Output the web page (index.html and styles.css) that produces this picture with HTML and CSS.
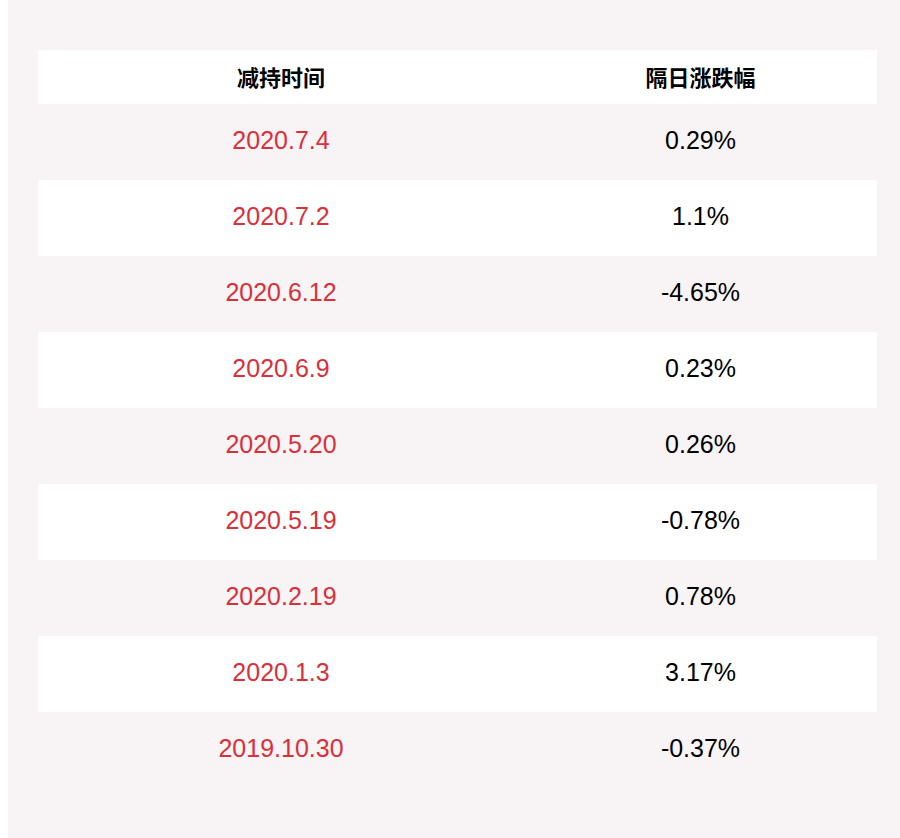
FILE: index.html
```html
<!DOCTYPE html>
<html lang="zh">
<head>
<meta charset="utf-8">
<link rel="stylesheet" href="styles.css">
</head>
<body>
<div class="panel">
  <table class="data">
    <thead>
      <tr class="head"><th class="c1">减持时间</th><th class="c2">隔日涨跌幅</th></tr>
    </thead>
    <tbody>
      <tr><td class="date">2020.7.4</td><td>0.29%</td></tr>
      <tr><td class="date">2020.7.2</td><td>1.1%</td></tr>
      <tr><td class="date">2020.6.12</td><td>-4.65%</td></tr>
      <tr><td class="date">2020.6.9</td><td>0.23%</td></tr>
      <tr><td class="date">2020.5.20</td><td>0.26%</td></tr>
      <tr><td class="date">2020.5.19</td><td>-0.78%</td></tr>
      <tr><td class="date">2020.2.19</td><td>0.78%</td></tr>
      <tr><td class="date">2020.1.3</td><td>3.17%</td></tr>
      <tr><td class="date">2019.10.30</td><td>-0.37%</td></tr>
    </tbody>
  </table>
</div>
</body>
</html>
```
FILE: styles.css
```css
html, body {
  margin: 0;
  padding: 0;
  background: #ffffff;
}
body {
  padding-left: 8px;
  font-family: "Liberation Sans", Arial, "Noto Sans CJK SC", sans-serif;
}
.panel {
  background: #f8f4f5;
  width: 892px;
  height: 838px;
  box-sizing: border-box;
  padding: 50px 23px 50px 30px;
}
.data {
  width: 839px;
  border-collapse: collapse;
  table-layout: fixed;
}
.data th, .data td {
  text-align: center;
  vertical-align: middle;
}
.head {
  height: 54px;
}
.data th {
  padding: 0 0 3px 0;
  background: #ffffff;
  font-family: "Noto Sans CJK SC", sans-serif;
  font-weight: bold;
  font-size: 22px;
  line-height: 30px;
  color: #000;
}
.c1 { width: 486px; }
.c2 { width: 353px; }
.data tbody tr {
  height: 76px;
}
.data td {
  padding: 0 0 4px 0;
  font-size: 25px;
  line-height: 30px;
  color: #000;
}
.data tbody tr:nth-child(even) td {
  background: #ffffff;
}
.data td.date {
  color: #d9303a;
}
```
